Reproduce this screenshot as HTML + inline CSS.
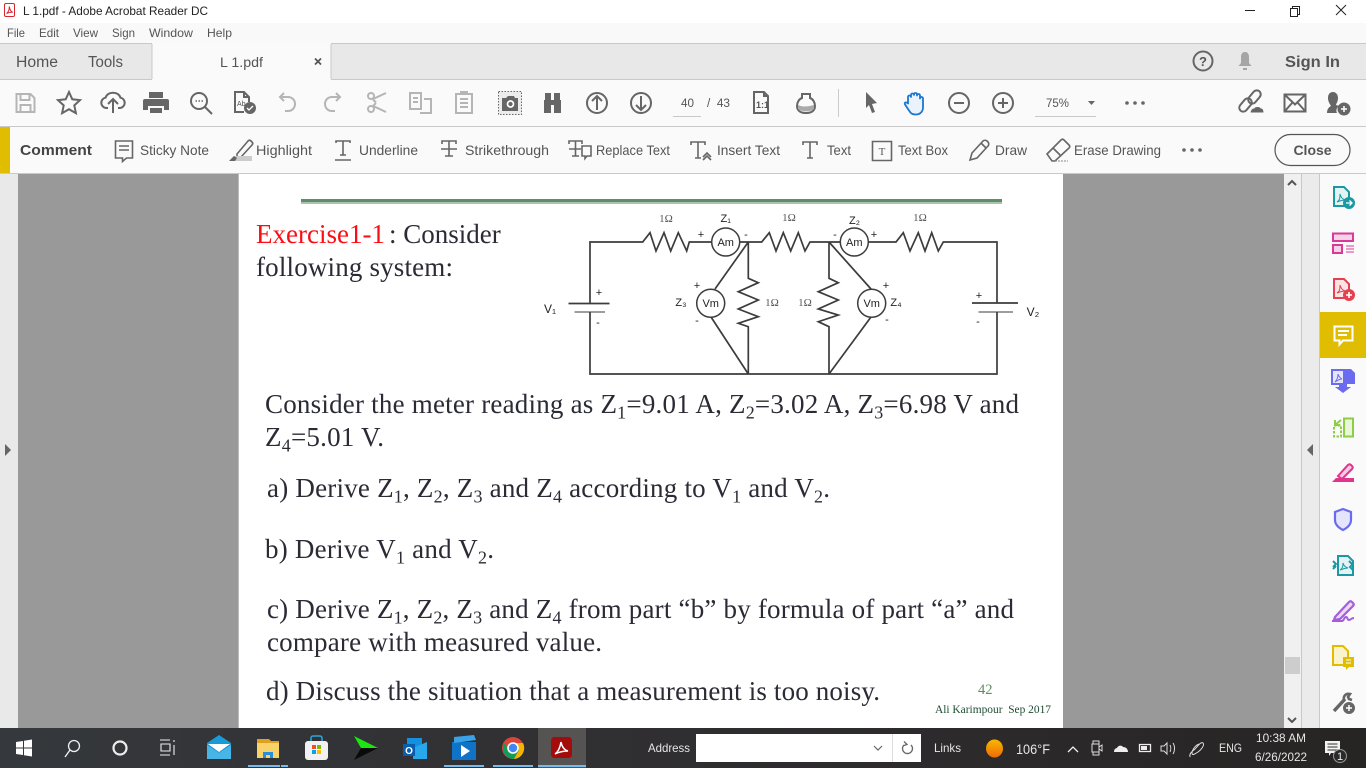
<!DOCTYPE html>
<html><head><meta charset="utf-8"><title>L 1.pdf - Adobe Acrobat Reader DC</title>
<style>
html,body{margin:0;padding:0;background:#fff;overflow:hidden;width:1366px;height:768px}
svg{display:block}
text{font-family:"Liberation Sans",sans-serif;fill:#555;white-space:pre}
.s text,text.s{font-family:"Liberation Serif",serif;fill:#2b2b36;font-size:27px}
.c text{font-size:11px;fill:#222;text-anchor:middle}
.c text.o{font-family:"Liberation Serif",serif;fill:#555}
.ui{font-size:14px;fill:#5a5a5a}
.tb text{fill:#e6e6e6;font-size:12px}
.i{fill:none;stroke:#666;stroke-width:2}
.g{fill:none;stroke:#b5b5b5;stroke-width:2}
.t{fill:none;stroke:#666;stroke-width:1.6}
</style></head><body>
<svg width="1366" height="768" viewBox="0 0 1366 768" xmlns="http://www.w3.org/2000/svg">
<defs><linearGradient id="tbg" x1="0" x2="1" y1="0" y2="0"><stop offset="0" stop-color="#35383c"/><stop offset=".45" stop-color="#302f31"/><stop offset="1" stop-color="#272424"/></linearGradient>
<linearGradient id="sun" x1="0" x2="0" y1="0" y2="1"><stop offset="0" stop-color="#f9b800"/><stop offset="1" stop-color="#ee6a06"/></linearGradient></defs>

<!-- chrome backgrounds -->
<rect width="1366" height="23" fill="#fff"/>
<rect y="23" width="1366" height="20" fill="#f9f9f9"/>
<rect y="43" width="1366" height="1" fill="#c9c9c9"/>
<rect y="44" width="1366" height="35" fill="#e8e8e8"/>
<rect y="79" width="1366" height="1" fill="#c9c9c9"/>
<rect x="152" y="43" width="179" height="37" fill="#fafafa"/>
<path d="M152 44V79M331 44V79" stroke="#c9c9c9"/>
<rect y="80" width="1366" height="46" fill="#fafafa"/>
<rect y="126" width="1366" height="1" fill="#c9c9c9"/>
<rect y="127" width="1366" height="46" fill="#fafafa"/>
<rect y="127" width="10" height="46" fill="#e0bd00"/>
<rect y="173" width="1366" height="1" fill="#c9c9c9"/>

<!-- document area -->
<rect y="174" width="18" height="554" fill="#e9e9e9"/>
<rect x="18" y="174" width="1266" height="554" fill="#999"/>
<rect x="238" y="174" width="1" height="554" fill="#bdbdbd"/>
<rect x="239" y="174" width="824" height="554" fill="#fff"/>
<rect x="1284" y="174" width="17" height="554" fill="#f0f0f0"/>
<rect x="1285" y="657" width="15" height="17" fill="#cdcdcd"/>
<rect x="1301" y="174" width="1" height="554" fill="#c8c8c8"/>
<rect x="1302" y="174" width="17" height="554" fill="#ebebeb"/>
<rect x="1319" y="174" width="1" height="554" fill="#c8c8c8"/>
<rect x="1320" y="174" width="46" height="554" fill="#fafafa"/>
<rect x="1320" y="312" width="46" height="46" fill="#e0bd00"/>
<path d="M5 444l6 6-6 6z" fill="#666"/>
<path d="M1313 444l-6 6 6 6z" fill="#666"/>
<path d="M1288 185l4-4 4 4M1288 718l4 4 4-4" fill="none" stroke="#555" stroke-width="2"/>

<!-- title bar -->
<rect x="4.500" y="3.500" width="10" height="13" rx="1.500" fill="#fff" stroke="#d8262c"/>
<path d="M6.500 13.500c2-1.200 2.800-3.500 2.800-7 .5 3 1.700 5.300 3.500 5.800-2.300-.3-4 .1-6.300 1.200z" fill="none" stroke="#d8262c"/>
<text x="23" y="15" font-size="12" style="fill:#222" textLength="185" lengthAdjust="spacingAndGlyphs">L 1.pdf - Adobe Acrobat Reader DC</text>
<path d="M1245 10.500h10" stroke="#222"/>
<path d="M1290.500 8.500h7v8h-7zM1292.500 8.500v-2h7v8h-2" fill="none" stroke="#222"/>
<path d="M1336 5l10 10M1346 5l-10 10" stroke="#222" stroke-width="1"/>

<!-- menu -->
<g font-size="12">
<text x="7" y="37" textLength="18" lengthAdjust="spacingAndGlyphs">File</text>
<text x="39" y="37" textLength="20" lengthAdjust="spacingAndGlyphs">Edit</text>
<text x="73" y="37" textLength="25" lengthAdjust="spacingAndGlyphs">View</text>
<text x="112" y="37" textLength="23" lengthAdjust="spacingAndGlyphs">Sign</text>
<text x="149" y="37" textLength="44" lengthAdjust="spacingAndGlyphs">Window</text>
<text x="207" y="37" textLength="25" lengthAdjust="spacingAndGlyphs">Help</text>
</g>

<!-- tabs -->
<text x="16" y="67" font-size="15.500" textLength="42" lengthAdjust="spacingAndGlyphs">Home</text>
<text x="88" y="67" font-size="15.500" textLength="35" lengthAdjust="spacingAndGlyphs">Tools</text>
<text x="220" y="67" font-size="14" textLength="43" lengthAdjust="spacingAndGlyphs">L 1.pdf</text>
<path d="M315 58.500l6 6M321 58.500l-6 6" stroke="#555" stroke-width="1.700"/>
<circle cx="1203" cy="61" r="9.500" class="i"/><text x="1203" y="66" font-size="13" font-weight="bold" text-anchor="middle">?</text>
<path d="M1245 52c-3 0-4 2.500-4 5v6l-2.500 3h13l-2.500-3v-6c0-2.500-1-5-4-5zM1243 68h4v2h-4z" fill="#a5a5a5"/>
<text x="1285" y="67" font-size="15.500" font-weight="bold" textLength="55" lengthAdjust="spacingAndGlyphs" style="fill:#555">Sign In</text>

<!-- main toolbar -->
<path class="g" d="M16.500 94h14l4 4v14h-18zM20.500 94v6h9v-6M20.500 112v-7h10v7"/>
<path class="i" d="M69 92l3.300 7.300 7.700.8-5.700 5.300 1.600 7.800-6.900-4-6.900 4 1.600-7.800-5.700-5.300 7.700-.8z"/>
<path class="i" d="M108 108h-1.500a5.200 5.200 0 0 1-1-10.300c1-3.200 4-5 7.500-5s6.500 1.800 7.500 5a5.200 5.200 0 0 1-1 10.300H118M113 113V99M108 104l5-5 5 5"/>
<path fill="#666" d="M149 92h14v6h-14zM145 99h22a2 2 0 0 1 2 2v9h-5v-4h-16v4h-5v-9a2 2 0 0 1 2-2zM150 108h12v5h-12z"/>
<circle cx="199" cy="101" r="8" class="i" stroke-width="2.200"/><path class="i" stroke-width="2.500" d="M205 107l7 7"/><path d="M195.500 101h1.500M198.500 101h1.500M201.500 101h1.500" stroke="#666" stroke-width="1.500"/>
<path class="i" stroke-width="1.700" d="M244 112h-9V92h9l5 5v5M244 92v5h5"/><text x="237" y="106" font-size="7">Ab</text>
<circle cx="250" cy="108" r="6" fill="#666"/><path d="M247 108l2 2 4-4" fill="none" stroke="#fff" stroke-width="1.300"/>
<path class="g" d="M284 93l-4 4 4 4M280 97h8c4 0 7 3 7 7s-3 7-7 7h-3"/>
<path class="g" d="M336 93l4 4-4 4M340 97h-8c-4 0-7 3-7 7s3 7 7 7h3"/>
<path class="g" d="M373 99l13-6M373 106l13 6M376 102.500l-3-3M376 103l-3 3" /><circle cx="371" cy="96" r="3" class="g"/><circle cx="371" cy="109" r="3" class="g"/>
<path class="g" stroke-width="1.500" d="M410 93h11v16h-11zM413 98h5M413 102h5M424 99h7v14h-11"/>
<path class="g" d="M456 94h16v19h-16zM461 94v-2h6v2M460 99h8M460 103h8M460 107h8"/>
<rect x="498.500" y="91.500" width="23" height="23" fill="#ececec" stroke="#666" stroke-dasharray="1.500 1.500"/>
<path fill="#666" d="M502 98h4l2-2h6l1 2h3v13h-16z"/><circle cx="510.500" cy="104" r="3" fill="none" stroke="#fff" stroke-width="1.700"/>
<path fill="#666" d="M545 93h6v7h3v-7h6v7h1v13h-7v-8h-3v8h-7v-13h1z"/>
<circle cx="597" cy="103" r="10" class="i"/><path class="i" d="M597 110V97M592 101l5-5 5 5"/>
<circle cx="641" cy="103" r="10" class="i"/><path class="i" d="M641 96v13M636 105l5 5 5-5"/>
<text x="681" y="107" font-size="11.500" textLength="13" lengthAdjust="spacingAndGlyphs">40</text>
<path d="M673 116.500h28" stroke="#c8c8c8"/>
<text x="707" y="107" font-size="11.500" textLength="23" lengthAdjust="spacingAndGlyphs">/  43</text>
<path class="i" stroke-width="1.800" d="M754 92h10l4 4v17h-14zM764 92v4h4"/><text x="756" y="108" font-size="9" font-weight="bold">1:1</text>
<path class="i" stroke-width="2" d="M802 94h8v4c3 1 5 4.500 5 8 0 5-4 7-9 7s-9-2-9-7c0-3.500 2-7 5-8z"/><path d="M798 105c4 2 9 2 16 0v4c-3 3-13 3-16 0z" fill="#aaa"/>
<path d="M838.500 89v28" stroke="#ccc"/>
<path d="M866 92l11 11-5 1 3 8-3 1-3-8-3 3z" fill="#666"/>
<path fill="#eaf3fc" stroke="#1c76d2" stroke-width="1.800" stroke-linejoin="round" d="M908 101v-4a1.500 1.500 0 0 1 3 0v-2a1.500 1.500 0 0 1 3 0v-.5a1.500 1.500 0 0 1 3 0v1a1.500 1.500 0 0 1 3 0v3a1.500 1.500 0 0 1 3 0v9c0 4-3 7-7 7s-5-1-7-4l-4-6c-1-2 1-3 3-1z"/>
<circle cx="959" cy="103" r="10" class="i"/><path class="i" d="M954 103h10"/>
<circle cx="1003" cy="103" r="10" class="i"/><path class="i" d="M998 103h10M1003 98v10"/>
<text x="1046" y="107" font-size="11.500" textLength="23" lengthAdjust="spacingAndGlyphs">75%</text>
<path d="M1035 116.500h61" stroke="#c8c8c8"/>
<path d="M1088 101h7l-3.500 4z" fill="#666"/>
<circle cx="1127" cy="103" r="1.800" fill="#666"/><circle cx="1135" cy="103" r="1.800" fill="#666"/><circle cx="1143" cy="103" r="1.800" fill="#666"/>
<g class="i" stroke-width="1.600"><rect x="1238" y="101" width="15" height="8" rx="4" transform="rotate(-50 1245.500 105)"/><rect x="1247" y="93" width="15" height="8" rx="4" transform="rotate(-50 1254.500 97)"/></g>
<path d="M1250 113c0-3 2-5 4-5 1-2 6-2 7 0 2 0 3 2 3 5z" fill="#666" stroke="#fafafa"/>
<path class="i" stroke-width="1.500" d="M1284.500 94.500h21v17h-21zM1284.500 94.500l10.500 10 10.500-10M1284.500 111.500l8-9M1305.500 111.500l-8-9"/>
<path d="M1333 92c3 0 5 2.500 5 6s-1.500 5-2 7l3 1c-3 2-3 5-2 7h-10c0-4 2-6 4-7-1-2-3-4-3-8s2-6 5-6z" fill="#666"/>
<circle cx="1344" cy="109" r="6.500" fill="#666"/><path d="M1341 109h6M1344 106v6" stroke="#fff" stroke-width="1.500"/>

<!-- comment toolbar -->
<text x="20" y="155" font-size="15" font-weight="bold" textLength="72" lengthAdjust="spacingAndGlyphs" style="fill:#444">Comment</text>
<g class="ui">
<text x="140" y="155" textLength="69" lengthAdjust="spacingAndGlyphs">Sticky Note</text>
<text x="256" y="155" textLength="56" lengthAdjust="spacingAndGlyphs">Highlight</text>
<text x="359" y="155" textLength="59" lengthAdjust="spacingAndGlyphs">Underline</text>
<text x="465" y="155" textLength="84" lengthAdjust="spacingAndGlyphs">Strikethrough</text>
<text x="596" y="155" textLength="74" lengthAdjust="spacingAndGlyphs">Replace Text</text>
<text x="717" y="155" textLength="63" lengthAdjust="spacingAndGlyphs">Insert Text</text>
<text x="827" y="155" textLength="24" lengthAdjust="spacingAndGlyphs">Text</text>
<text x="898" y="155" textLength="50" lengthAdjust="spacingAndGlyphs">Text Box</text>
<text x="995" y="155" textLength="32" lengthAdjust="spacingAndGlyphs">Draw</text>
<text x="1074" y="155" textLength="87" lengthAdjust="spacingAndGlyphs">Erase Drawing</text>
</g>
<path class="t" stroke-width="2" d="M115.500 141h17v17h-6l-4 3.500V158h-7zM119 146h10M119 150h10"/>
<path class="t" stroke-width="1.800" d="M237 154l11-13c1-1 2-1 3 0l1 1c1 1 1 2 0 3l-11 12h-4z"/><path d="M229 161l5-5h18v5z" fill="#ccc"/><path d="M229 161l5-5 3 2-2 3z" fill="#666"/>
<path class="t" d="M336 143v-2h14v2M343 141v14M340 155h6M335 160h16"/>
<path class="t" d="M442 144v-3h14v3M449 141v15M445 156h8M441 149h16"/>
<path class="t" d="M569 144v-3h13v3M575.500 141v15M572 156h7M569 149h12"/><path class="t" d="M582 146h9v10h-4l-2 2.500V156h-3z" fill="#fafafa"/>
<path class="t" d="M691 145v-3h14v3M698 142v16M695 158h6"/><path class="t" d="M703 160l4-4 4 4M703 157l4-4 4 4" stroke-width="1.200"/>
<path class="t" d="M803 145v-3h14v3M810 142v16M807 158h6"/>
<path class="t" d="M872.500 141.500h19v19h-19z" stroke-width="1.800"/><text x="882" y="155" font-size="11" text-anchor="middle" style="font-family:'Liberation Serif',serif;fill:#555">T</text>
<path class="t" stroke-width="1.800" d="M970 160l2-7 11-12c1-1 3-1 4 0l1 1c1 1 1 3 0 4l-11 12zM981 143l5 5"/>
<path class="t" stroke-width="1.800" d="M1047 154l14-14c1-1 2-1 3 0l5 5c1 1 1 2 0 3l-14 13h-3zM1053 148l8 8"/><path d="M1055 161h13" stroke="#888" stroke-dasharray="2 1"/>
<circle cx="1184" cy="150" r="1.800" fill="#666"/><circle cx="1192" cy="150" r="1.800" fill="#666"/><circle cx="1200" cy="150" r="1.800" fill="#666"/>
<rect x="1275" y="134.500" width="75" height="31" rx="15.500" fill="#fafafa" stroke="#555" stroke-width="1.200"/>
<text x="1312.500" y="155" font-size="14" font-weight="bold" text-anchor="middle" style="fill:#555">Close</text>

<!-- page content -->
<rect x="301" y="199" width="701" height="3" fill="#5f8c69"/>
<rect x="301" y="202" width="701" height="2" fill="#a9c5ae"/>
<g class="s">
<text x="256" y="243" style="fill:#fb0d14">Exercise1-1</text>
<text x="389" y="243">: Consider</text>
<text x="256" y="276" textLength="197" lengthAdjust="spacing">following system:</text>
<text x="265" y="413" textLength="754" lengthAdjust="spacing">Consider the meter reading as Z<tspan font-size="18" dy="5.500">1</tspan><tspan dy="-5.500">=9.01 A, Z</tspan><tspan font-size="18" dy="5.500">2</tspan><tspan dy="-5.500">=3.02 A, Z</tspan><tspan font-size="18" dy="5.500">3</tspan><tspan dy="-5.500">=6.98 V and</tspan></text>
<text x="265" y="446" textLength="119" lengthAdjust="spacing">Z<tspan font-size="18" dy="5.500">4</tspan><tspan dy="-5.500">=5.01 V.</tspan></text>
<text x="267" y="497" textLength="563" lengthAdjust="spacing">a) Derive Z<tspan font-size="18" dy="5.500">1</tspan><tspan dy="-5.500">, Z</tspan><tspan font-size="18" dy="5.500">2</tspan><tspan dy="-5.500">, Z</tspan><tspan font-size="18" dy="5.500">3</tspan><tspan dy="-5.500"> and Z</tspan><tspan font-size="18" dy="5.500">4</tspan><tspan dy="-5.500"> according to V</tspan><tspan font-size="18" dy="5.500">1</tspan><tspan dy="-5.500"> and V</tspan><tspan font-size="18" dy="5.500">2</tspan><tspan dy="-5.500">.</tspan></text>
<text x="265" y="558" textLength="229" lengthAdjust="spacing">b) Derive V<tspan font-size="18" dy="5.500">1</tspan><tspan dy="-5.500"> and V</tspan><tspan font-size="18" dy="5.500">2</tspan><tspan dy="-5.500">.</tspan></text>
<text x="267" y="618" textLength="747" lengthAdjust="spacing">c) Derive Z<tspan font-size="18" dy="5.500">1</tspan><tspan dy="-5.500">, Z</tspan><tspan font-size="18" dy="5.500">2</tspan><tspan dy="-5.500">, Z</tspan><tspan font-size="18" dy="5.500">3</tspan><tspan dy="-5.500"> and Z</tspan><tspan font-size="18" dy="5.500">4</tspan><tspan dy="-5.500"> from part “b” by formula of part “a” and</tspan></text>
<text x="267" y="651" textLength="335" lengthAdjust="spacing">compare with measured value.</text>
<text x="266" y="700" textLength="614" lengthAdjust="spacing">d) Discuss the situation that a measurement is too noisy.</text>
<text x="978" y="694" style="font-size:14.500px;fill:#5f8c5f">42</text>
<text x="935" y="713" textLength="116" lengthAdjust="spacingAndGlyphs" style="font-size:11.500px;fill:#1e4d33">Ali Karimpour  Sep 2017</text>
</g>

<!-- circuit -->
<g fill="none" stroke="#3c3c3c" stroke-width="1.700">
<path d="M590 303V242H642.700L650 232.700 656 251 664 232.700 670.700 251 678.300 232.700 686.700 251 689.300 242H711.700"/>
<path d="M740 242H761.700L769.300 232.700 776 251 783.300 232.700 790.700 251 798.300 232.700 805 251 810 242H840"/>
<path d="M868 242H896L903.300 232.700 910 251 918.300 232.700 925 251 931.700 232.700 938.300 251 943.300 242H997V303"/>
<path d="M590 312V374H997V312"/>
<path d="M568.500 303.500H609.500" stroke-width="1.800"/><path d="M574.500 312H605" stroke-width="1"/>
<path d="M972 303H1018" stroke-width="1.800"/><path d="M978.500 312H1013" stroke-width="1"/>
<path d="M748.300 242V278.300L758.300 282.700 738.300 291.700 758.300 300 738.300 309 758.300 316.700 738.300 323.300 748.300 326.700V374"/>
<path d="M829 242V278.300L838.300 282.700 818.300 291.700 838.300 300 818.300 309 838.300 315 818.300 321.700 829 326.700V374"/>
<path d="M748.300 242L715 289M711 317L748.300 374"/>
<path d="M829 242L871 289M871 317L829 374"/>
<circle cx="725.700" cy="242" r="14" fill="#fff" stroke-width="1.500"/>
<circle cx="854.300" cy="242" r="14" fill="#fff" stroke-width="1.500"/>
<circle cx="710.700" cy="303.300" r="14" fill="#fff" stroke-width="1.500"/>
<circle cx="871.700" cy="303.300" r="14" fill="#fff" stroke-width="1.500"/>
</g>
<g class="c">
<text x="725.700" y="246">Am</text><text x="854.300" y="246">Am</text>
<text x="710.700" y="307">Vm</text><text x="871.700" y="307">Vm</text>
<text x="725.700" y="222">Z₁</text><text x="854.500" y="224">Z₂</text>
<text x="681" y="306">Z₃</text><text x="896" y="306">Z₄</text>
<text x="550" y="313" style="font-size:12px">V₁</text><text x="1033" y="316" style="font-size:12px">V₂</text>
<text class="o" x="666" y="222">1Ω</text><text class="o" x="789" y="221">1Ω</text><text class="o" x="920" y="221">1Ω</text>
<text class="o" x="772" y="306">1Ω</text><text class="o" x="805" y="306">1Ω</text>
<text x="701" y="238">+</text><text x="746" y="238">-</text><text x="835" y="238">-</text><text x="874" y="238">+</text>
<text x="697" y="289">+</text><text x="697" y="324">-</text><text x="886" y="289">+</text><text x="887" y="323">-</text>
<text x="599" y="296">+</text><text x="598" y="326">-</text><text x="979" y="299">+</text><text x="978" y="325">-</text>
</g>

<!-- right panel icons -->
<g fill="none" stroke-width="2">
<path stroke="#1a99a4" fill="#e3f3f4" d="M1334 187h10l5 5v14h-15z"/><path stroke="#1a99a4" stroke-width="1" d="M1337 202c3-2 3-4 3-8 1 3 2 5 5 6-3 0-5 1-8 2z"/>
<circle cx="1349" cy="203" r="6" fill="#1a99a4" stroke="none"/><path stroke="#fff" stroke-width="1.300" d="M1346 203h5M1349.500 200.500l2.500 2.500-2.500 2.500"/>
<rect x="1333" y="233.500" width="20" height="7.500" stroke="#d93a97" fill="#f7d3e8"/><rect x="1333" y="245" width="9" height="8" stroke="#d93a97" fill="#f7d3e8"/><path stroke="#d93a97" stroke-width="1" d="M1346 246h8M1346 249h8M1346 252h8"/>
<path stroke="#e5404f" fill="#fbe3e5" d="M1334 279h10l5 5v14h-15z"/><path stroke="#e5404f" stroke-width="1" d="M1337 293c3-2 3-4 3-8 1 3 2 5 5 6-3 0-5 1-8 2z"/><circle cx="1349" cy="295" r="6" fill="#e5404f" stroke="none"/><path stroke="#fff" stroke-width="1.600" d="M1346 295h6M1349 292v6"/>
<path stroke="#fff" d="M1334.500 326.500h18v14h-9.500l-3.500 4v-4h-5z"/><path stroke="#fff" d="M1338 331h11M1338 335h9"/>
<path stroke="#6b6bf0" fill="#e4e4fc" d="M1332 370h12v14h-12z"/><path fill="#6b6bf0" stroke="none" d="M1344 369h7l4 4v11h-11zM1339 384h8v3h4l-8 6-8-6h4z"/><path stroke="#6b6bf0" stroke-width="1" d="M1335 382c2-2 3-4 3-8 1 3 2 4 4 5-2 0-4 1-7 3z"/>
<path stroke="#8ccf45" fill="#e9f6dc" d="M1344 418.500h9v18h-9z"/><path stroke="#8ccf45" stroke-dasharray="2.500 1.500" d="M1334 425.500h7v11h-7z"/><path stroke="#8ccf45" d="M1341 420l-6 5M1335 420v5h5"/>
<path fill="#f8c9e3" stroke="#e0348f" d="M1338 476l10-11c1-1 2-1 3 0l1 1c1 1 1 2 0 3l-10 10z"/><path fill="#e0348f" stroke="none" d="M1332 482l4-4h18v4z"/>
<path stroke="#6b6bf0" fill="#e4e4fc" stroke-width="2.200" d="M1343 509l8 3v8c0 5-4 8-8 10-4-2-8-5-8-10v-8z"/>
<path stroke="#1a99a4" fill="#e3f3f4" d="M1338 556h10l5 5v14h-15z"/><path stroke="#1a99a4" d="M1333 561l3 3-3 3M1353 564l-3 3 3 3M1349 561l3 3M1333 569l3-3"/><path stroke="#1a99a4" stroke-width="1" d="M1340 570c3-2 3-4 3-7 1 3 2 4 5 5-3 0-5 1-8 2z"/>
<path stroke="#a55ddb" fill="#ead9f7" stroke-width="2.200" d="M1335 617l14-15c1-1 2-1 3 0l1 1c1 1 1 2 0 3l-13 13-6 1z"/><path stroke="#a55ddb" stroke-width="2" d="M1332 621h10c2 0 2-4 4-4s1 3 3 3 2-2 5-2"/>
<path stroke="#e0bd00" fill="#faf3cc" d="M1333 646h10l5 5v14h-15z"/><path fill="#e0bd00" stroke="none" d="M1343 657h11v10h-5l-3 3v-3h-3z"/><path stroke="#fff" stroke-width="1" d="M1346 660h5M1346 663h5"/>
<path stroke="#666" stroke-width="3.500" d="M1334 711l11-12"/><path stroke="#666" stroke-width="2.600" d="M1344 700c-1-4 2-7 6-6l-2 3 1 2 3 1"/>
<circle cx="1349" cy="708" r="6.500" fill="#666" stroke="#fafafa" stroke-width="1"/><path stroke="#fff" stroke-width="1.500" d="M1346 708h6M1349 705v6"/>
</g>

<!-- taskbar -->
<rect y="728" width="1366" height="40" fill="url(#tbg)"/>
<rect x="538" y="728" width="48" height="40" fill="#555453"/>
<path d="M248 766h32M281 766h7M444 766h40M493 766h40M538 766h48" stroke="#76b9ed" stroke-width="2"/>
<path fill="#fff" d="M16 742l7-1v6.500h-7zM24 740.700l8-1.200v8h-8zM16 748.500h7v6.500l-7-1zM24 748.500h8v8l-8-1.200z"/>
<circle cx="74" cy="746" r="5.500" fill="none" stroke="#eee" stroke-width="1.300"/><path d="M70 750l-5 7" stroke="#eee" stroke-width="1.400"/>
<circle cx="120" cy="748" r="6.500" fill="none" stroke="#eee" stroke-width="2.200"/>
<path fill="none" stroke="#eee" stroke-width="1.100" d="M160 740h10M160 755h10M161 744h9v7h-9zM174 740v2M174 745v10"/>
<path fill="#1a9ad6" d="M207 743l12-8 12 8v16h-24z"/><path fill="#fff" d="M208 744h22l-11 8z"/><path fill="#5cc0ee" d="M207 745l12 8 12-8v14h-24z" opacity=".7"/>
<path fill="#e0a020" d="M257 739h12l2 2h8v3h-22z"/><path fill="#f7d36a" d="M257 743h22v15h-22z"/><path fill="#2a8fd8" d="M263 758v-6h10v6h-3v-3h-4v3z"/>
<rect x="305" y="741" width="23" height="19" rx="3" fill="#f1f1f1"/><path d="M311 741v-3a2 2 0 0 1 2-2h7a2 2 0 0 1 2 2v3" fill="none" stroke="#2aa5e0" stroke-width="1.500"/>
<path fill="#f25022" d="M312 745h4v4h-4z"/><path fill="#7fba00" d="M317 745h4v4h-4z"/><path fill="#00a4ef" d="M312 750h4v4h-4z"/><path fill="#ffb900" d="M317 750h4v4h-4z"/>
<path fill="#1ce60f" d="M354 736l24 12-17 0z"/><path fill="#0a0a0a" d="M354 760l24-12-17 0z"/>
<path fill="#0b65bd" d="M408 739h12v4h-12z"/><path fill="#1490df" d="M407 738h15v15h-15z"/><path fill="#28a8ea" d="M413 748l14-6v17h-14z"/><rect x="403" y="744" width="12" height="12" fill="#0a5cad"/><text x="409" y="754" font-size="10" font-weight="bold" text-anchor="middle" style="fill:#fff">O</text>
<path fill="#0f74c7" d="M452 742h24v18h-24z"/><path fill="#3aa3e8" d="M454 737l20-2 2 5-22 3z"/><path fill="#fff" d="M461 745l9 6-9 6z"/>
<circle cx="513" cy="748" r="11" fill="#db4437"/><path fill="#0f9d58" d="M504 743a11 11 0 0 0 10 16l5-9h-10z"/><path fill="#f4b400" d="M513 743h10a11 11 0 0 1-9 16l5-9z"/><circle cx="513" cy="748" r="5" fill="#4285f4" stroke="#fff" stroke-width="1.600"/>
<rect x="551" y="737" width="21" height="21" rx="3.500" fill="#a40b0b"/><path d="M555 754c3-2 5-6 6-12 .8 4 3 8 7 9-4 0-9 1-13 3z" fill="none" stroke="#fff" stroke-width="1.500"/>

<g class="tb">
<text x="648" y="752" textLength="42" lengthAdjust="spacingAndGlyphs">Address</text>
<text x="934" y="752" textLength="27" lengthAdjust="spacingAndGlyphs">Links</text>
<text x="1016" y="754" style="font-size:14px" textLength="34" lengthAdjust="spacingAndGlyphs">106°F</text>
<text x="1219" y="752" textLength="23" lengthAdjust="spacingAndGlyphs">ENG</text>
<text x="1256" y="742" textLength="50" lengthAdjust="spacingAndGlyphs">10:38 AM</text>
<text x="1255" y="761" textLength="52" lengthAdjust="spacingAndGlyphs">6/26/2022</text>
</g>
<rect x="696" y="734" width="225" height="28" fill="#fff"/>
<path d="M892.500 734v28" stroke="#ddd"/>
<path d="M874 746l4 4 4-4" fill="none" stroke="#666" stroke-width="1.200"/>
<path d="M911 745a5 5 0 1 1-7 0M904 741.500l3 3-3 1" fill="none" stroke="#666" stroke-width="1.300"/>
<ellipse cx="994.500" cy="748.500" rx="8.500" ry="9" fill="url(#sun)"/>
<path d="M1068 752l5-5 5 5" fill="none" stroke="#eee" stroke-width="1.300"/>
<path d="M1093 744v-3h6v3M1093 752v3h6v-3" fill="none" stroke="#ddd"/><path d="M1092 744h7v8h-7zM1099 747l3-2v6l-3-2" fill="none" stroke="#ddd"/>
<path d="M1114 752c0-3 2-4 3-4 1-3 5-3 6-1 3 0 5 2 5 5z" fill="#eee"/>
<path d="M1139.500 744.500h11v7h-11z" fill="none" stroke="#eee" stroke-width="1.300"/><rect x="1141" y="746" width="6" height="4" fill="#eee"/>
<path d="M1161 746h3l3-3v11l-3-3h-3zM1170 745c1 2 1 5 0 7M1173 743c2 3 2 8 0 11" fill="none" stroke="#ddd"/>
<path d="M1190 757c-1-4 3-6 5-8s6-8 8-6-2 7-5 9-6 4-6 1 4-9 8-9" fill="none" stroke="#ddd"/>
<path d="M1325 741h15v12h-9l-2 3v-3h-4z" fill="#f2f2f2"/><path d="M1327.500 744h10M1327.500 747h10M1327.500 750h10" stroke="#333" stroke-width="1"/>
<circle cx="1340" cy="756" r="6.500" fill="#2a2a2a" stroke="#999"/><text x="1340" y="760" font-size="11" text-anchor="middle" style="fill:#eee">1</text>
</svg>
</body></html>
